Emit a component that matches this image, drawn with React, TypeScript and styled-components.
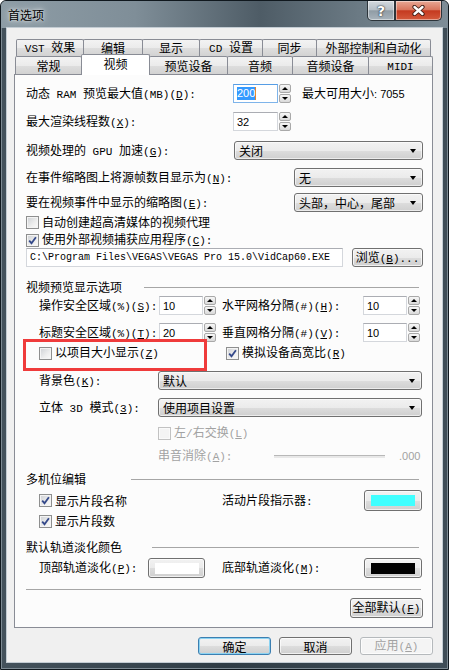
import React from 'react';
import styled, { createGlobalStyle } from 'styled-components';

const GlobalStyle = createGlobalStyle`
  html, body {
    margin: 0;
    padding: 0;
    width: 449px;
    height: 670px;
    overflow: hidden;
    background: #fff;
  }
  body {
    font-family: "Noto Sans CJK SC", "Liberation Sans", sans-serif;
    font-size: 12px;
    color: #000;
  }
`;

// latin runs inside the labels are drawn in a fixed-width face, like the old dialog font
const Latin = styled.span`
  font-family: "Liberation Mono", monospace;
  font-size: 11px;
`;

const withKeys = (s: string) =>
  s.split(/&(.)/).map((part, i) => (i % 2 === 1 ? <u key={i}>{part}</u> : part));

const Mixed = ({ text }: { text: string }) => (
  <>
    {text.split(/([\x20-\x7e]+)/).map((part, i) =>
      i % 2 === 1 ? <Latin key={i}>{withKeys(part)}</Latin> : part
    )}
  </>
);

const Window = styled.div`
  box-sizing: border-box;
  width: 449px;
  height: 670px;
  display: flex;
  flex-direction: column;
  padding: 0 6px 7px;
  border: 1px solid #10181e;
  border-radius: 6px 6px 0 0;
  background: linear-gradient(to right, #44525c, #2f3c45 50%, #3f4d57);
  box-shadow: inset 0 0 0 1px #7d8a93;
`;

const TitleBar = styled.div`
  height: 27px;
  margin: 0 -6px;
  padding: 0 6px 0 7px;
  display: flex;
  align-items: flex-start;
  border-radius: 5px 5px 0 0;
  background: linear-gradient(
    to right,
    #8e9da6 0%,
    #7f8e98 30%,
    #4e5c66 58%,
    #6b7a84 80%,
    #7e8d97 100%
  );
`;

const TitleText = styled.span`
  font-size: 12px;
  line-height: 27px;
  text-shadow: 0 0 7px rgba(255, 255, 255, 0.9), 0 0 3px rgba(255, 255, 255, 0.7);
`;

const CaptionButtons = styled.div`
  display: flex;
  margin-left: auto;
`;

const CaptionBtn = styled.div<{ $close?: boolean }>`
  box-sizing: border-box;
  width: ${p => (p.$close ? 47 : 28)}px;
  height: 20px;
  display: flex;
  align-items: center;
  justify-content: center;
  border: 1px solid #2c343a;
  border-top: none;
  border-radius: ${p => (p.$close ? '0 0 5px 0' : '0 0 0 5px')};
  background: ${p =>
    p.$close
      ? 'linear-gradient(#e8a895 0%, #d9775f 45%, #c53a20 52%, #d45a3c 100%)'
      : 'linear-gradient(#d3d9de 0%, #b7c0c7 45%, #909ca5 52%, #a9b4bc 100%)'};
  box-shadow: inset 0 0 0 1px rgba(255, 255, 255, 0.45);
  color: #fff;
  font: bold 14px "DejaVu Sans", sans-serif;
  text-shadow: 0 0 2px #1c232a, 0 0 1px #1c232a;
`;

const Client = styled.div`
  flex: 1;
  display: flex;
  flex-direction: column;
  padding: 11px 9px 7px 7px;
  background: #f0f0f0;
  box-shadow: 0 0 0 1px #c3ccd3;
`;

const TabStrip = styled.div`
  display: flex;
  flex-direction: column;
`;

const TabRow = styled.div<{ $h: number; $inset: number }>`
  display: flex;
  height: ${p => p.$h}px;
  padding-left: ${p => p.$inset}px;
`;

const Tab = styled.div<{ $w: number; $active?: boolean }>`
  box-sizing: border-box;
  width: ${p => p.$w}px;
  margin-right: -1px;
  display: flex;
  align-items: center;
  justify-content: center;
  border: 1px solid #898c95;
  border-bottom: none;
  border-radius: 2px 2px 0 0;
  white-space: nowrap;
  background: ${p =>
    p.$active ? '#fff' : 'linear-gradient(#f3f3f3 0%, #ebebeb 50%, #dedede 51%, #d2d2d2 100%)'};
  position: relative;
  z-index: ${p => (p.$active ? 1 : 0)};
  height: ${p => (p.$active ? 'calc(100% + 3px)' : '100%')};
  margin-top: ${p => (p.$active ? -2 : 0)}px;
  padding-bottom: ${p => (p.$active ? 3 : 0)}px;
`;

const Pane = styled.div`
  flex: 1;
  display: flex;
  flex-direction: column;
  border: 1px solid #898c95;
  background: #fcfcfc;
  padding: 9px 9px 9px 11px;
`;

const Row = styled.div<{ $h: number; $mt?: number; $indent?: number }>`
  position: relative;
  display: flex;
  align-items: center;
  flex-shrink: 0;
  height: ${p => p.$h}px;
  margin-top: ${p => p.$mt ?? 0}px;
  padding-left: ${p => p.$indent ?? 0}px;
`;

const Label = styled.span<{ $w?: number; $off?: boolean; $gap?: number }>`
  flex-shrink: 0;
  width: ${p => (p.$w ? `${p.$w}px` : 'auto')};
  margin-left: ${p => p.$gap ?? 0}px;
  white-space: nowrap;
  line-height: 14px;
  color: ${p => (p.$off ? '#a2a2a2' : '#000')};
`;

const Spacer = styled.div`
  flex: 1;
`;

const Num = styled.span<{ $off?: boolean; $gap?: number }>`
  font-family: "Liberation Sans", sans-serif;
  font-size: 11px;
  margin-left: ${p => p.$gap ?? 0}px;
  color: ${p => (p.$off ? '#a2a2a2' : '#000')};
`;

const TextBox = styled.div<{ $w: number; $focus?: boolean }>`
  box-sizing: border-box;
  flex-shrink: 0;
  width: ${p => p.$w}px;
  height: 19px;
  display: flex;
  align-items: center;
  padding-left: 3px;
  background: #fff;
  border: 1px solid ${p => (p.$focus ? '#7eb4ea' : '#d4d7dc')};
  border-top-color: ${p => (p.$focus ? '#569de5' : '#abadb3')};
  font-family: "Liberation Sans", sans-serif;
  font-size: 11px;
`;

const Selection = styled.span`
  background: #3399ff;
  color: #fff;
  line-height: 13px;
  border-right: 1px solid #e0842e;
`;

const PathText = styled.span`
  font-family: "Liberation Mono", monospace;
  font-size: 10px;
  white-space: nowrap;
`;

const Spinner = styled.div`
  display: flex;
  flex-direction: column;
  gap: 1px;
  width: 12px;
  height: 19px;
  margin-left: 1px;
  flex-shrink: 0;
`;

const SpinPart = styled.div<{ $down?: boolean }>`
  flex: 1;
  box-sizing: border-box;
  display: flex;
  align-items: center;
  justify-content: center;
  border: 1px solid #a9a9a9;
  border-radius: 2px;
  background: linear-gradient(#f7f7f7, #d9d9d9);

  &::after {
    content: '';
    border-left: 3px solid transparent;
    border-right: 3px solid transparent;
    ${p => (p.$down ? 'border-top: 3px solid #000;' : 'border-bottom: 3px solid #000;')}
  }
`;

const Combo = styled.div<{ $w: number }>`
  box-sizing: border-box;
  flex-shrink: 0;
  width: ${p => p.$w}px;
  height: 19px;
  display: flex;
  align-items: center;
  justify-content: space-between;
  padding: 0 6px 0 4px;
  border: 1px solid #707070;
  border-radius: 3px;
  background: linear-gradient(#f2f2f2 0%, #ebebeb 50%, #dddddd 51%, #cfcfcf 100%);
  box-shadow: inset 0 0 0 1px rgba(255, 255, 255, 0.6);
  white-space: nowrap;

  &::after {
    content: '';
    border-left: 3.5px solid transparent;
    border-right: 3.5px solid transparent;
    border-top: 4px solid #000;
  }
`;

const CheckItem = styled.div<{ $w?: number }>`
  display: flex;
  align-items: center;
  flex-shrink: 0;
  width: ${p => (p.$w ? `${p.$w}px` : 'auto')};
`;

const Box = styled.span<{ $off?: boolean }>`
  box-sizing: border-box;
  width: 13px;
  height: 13px;
  margin-right: 3px;
  flex-shrink: 0;
  display: flex;
  align-items: center;
  justify-content: center;
  border: 1px solid ${p => (p.$off ? '#c2c2c2' : '#8e8f8f')};
  background: ${p =>
    p.$off ? '#f4f4f4' : 'linear-gradient(135deg, #cdd0d4 0%, #eeeeee 60%, #fafafa 100%)'};
  box-shadow: inset 0 0 0 1px ${p => (p.$off ? '#fafafa' : '#f4f4f4')};
`;

const PushButton = styled.div<{ $w: number; $h: number; $default?: boolean; $off?: boolean }>`
  box-sizing: border-box;
  flex-shrink: 0;
  width: ${p => p.$w}px;
  height: ${p => p.$h}px;
  display: flex;
  align-items: center;
  justify-content: center;
  white-space: nowrap;
  border: 1px solid ${p => (p.$default ? '#3c7fb1' : p.$off ? '#b5b9bc' : '#707070')};
  border-radius: 3px;
  color: ${p => (p.$off ? '#8d8d8d' : '#000')};
  background: ${p =>
    p.$off ? '#f4f4f4' : 'linear-gradient(#f2f2f2 0%, #ebebeb 50%, #dddddd 51%, #cfcfcf 100%)'};
  box-shadow: inset 0 0 0 1px ${p => (p.$default ? '#8cd3f2' : 'rgba(255, 255, 255, 0.7)')};
`;

const Swatch = styled.span<{ $color: string }>`
  width: 44px;
  height: 11px;
  background: ${p => p.$color};
`;

const Track = styled.div<{ $w: number }>`
  flex-shrink: 0;
  width: ${p => p.$w}px;
  height: 2px;
  border-top: 1px solid #b8b8b8;
  background: #e8e8e8;
`;

const Rule = styled.div<{ $mr?: number }>`
  flex: 1;
  height: 0;
  margin-right: ${p => p.$mr ?? 0}px;
  border-top: 1px solid #a6a6a6;
`;

const Highlight = styled.div`
  position: absolute;
  left: -3px;
  top: -5px;
  width: 184px;
  height: 32px;
  box-sizing: border-box;
  border: 3px solid #ef3b3b;
  pointer-events: none;
`;

const ButtonBar = styled.div`
  display: flex;
  justify-content: flex-end;
  gap: 8px;
  margin-top: 9px;
`;

const CheckMark = () => (
  <svg width="9" height="9" viewBox="0 0 9 9">
    <path d="M1.2 4.6 L3.5 7.2 L7.9 1.2" fill="none" stroke="#34498a" strokeWidth="1.8" />
  </svg>
);

const Check = ({ label, checked, off, w }: { label: string; checked?: boolean; off?: boolean; w?: number }) => (
  <CheckItem $w={w}>
    <Box $off={off}>{checked && <CheckMark />}</Box>
    <Label $off={off}>
      <Mixed text={label} />
    </Label>
  </CheckItem>
);

const SpinField = ({ value, w, selected }: { value: string; w: number; selected?: boolean }) => (
  <>
    <TextBox $w={w} $focus={selected}>
      {selected ? <Selection>{value}</Selection> : value}
    </TextBox>
    <Spinner>
      <SpinPart />
      <SpinPart $down />
    </Spinner>
  </>
);

const tabsBack: [string, number][] = [
  ['VST 效果', 68],
  ['编辑', 60],
  ['显示', 58],
  ['CD 设置', 64],
  ['同步', 55],
  ['外部控制和自动化', 115],
];

const tabsFront: [string, number][] = [
  ['常规', 67],
  ['视频', 69],
  ['预览设备', 79],
  ['音频', 66],
  ['音频设备', 77],
  ['MIDI', 65],
];

const App = () => (
  <>
    <GlobalStyle />
    <Window>
      <TitleBar>
        <TitleText>首选项</TitleText>
        <CaptionButtons>
          <CaptionBtn>?</CaptionBtn>
          <CaptionBtn $close>
            <svg width="13" height="11" viewBox="0 0 13 11">
              <path d="M2.5 2 L10.5 9 M10.5 2 L2.5 9" stroke="#3b1c14" strokeWidth="4.2" strokeLinecap="round" />
              <path d="M2.5 2 L10.5 9 M10.5 2 L2.5 9" stroke="#fff" strokeWidth="2.4" strokeLinecap="round" />
            </svg>
          </CaptionBtn>
        </CaptionButtons>
      </TitleBar>

      <Client>
        <TabStrip>
          <TabRow $h={17} $inset={2}>
            {tabsBack.map(([name, w]) => (
              <Tab key={name} $w={w}>
                <Label>
                  <Mixed text={name} />
                </Label>
              </Tab>
            ))}
          </TabRow>
          <TabRow $h={18} $inset={1}>
            {tabsFront.map(([name, w]) => (
              <Tab key={name} $w={w} $active={name === '视频'}>
                <Label>
                  <Mixed text={name} />
                </Label>
              </Tab>
            ))}
          </TabRow>
        </TabStrip>

        <Pane>
          <Row $h={19}>
            <Label $w={207}>
              <Mixed text="动态 RAM 预览最大值(MB)(&D):" />
            </Label>
            <SpinField value="200" w={45} selected />
            <Label $gap={11}>
              最大可用大小<Num>:&nbsp;7055</Num>
            </Label>
          </Row>
          <Row $h={19} $mt={9}>
            <Label $w={207}>
              <Mixed text="最大渲染线程数(&X):" />
            </Label>
            <SpinField value="32" w={45} />
          </Row>
          <Row $h={19} $mt={10}>
            <Label>
              <Mixed text="视频处理的 GPU 加速(&G):" />
            </Label>
            <Spacer />
            <Combo $w={189}>关闭</Combo>
          </Row>
          <Row $h={19} $mt={8}>
            <Label>
              <Mixed text="在事件缩略图上将源帧数目显示为(&N):" />
            </Label>
            <Spacer />
            <Combo $w={129}>无</Combo>
          </Row>
          <Row $h={19} $mt={6}>
            <Label>
              <Mixed text="要在视频事件中显示的缩略图(&E):" />
            </Label>
            <Spacer />
            <Combo $w={129}>头部，中心，尾部</Combo>
          </Row>
          <Row $h={14} $mt={3}>
            <Check label="自动创建超高清媒体的视频代理" />
          </Row>
          <Row $h={14} $mt={4}>
            <Check label="使用外部视频捕获应用程序(&C):" checked />
          </Row>
          <Row $h={19} $mt={1}>
            <TextBox $w={317}>
              <PathText>{'C:\\Program Files\\VEGAS\\VEGAS Pro 15.0\\VidCap60.EXE'}</PathText>
            </TextBox>
            <Spacer />
            <PushButton $w={71} $h={19}>
              <Label>
                <Mixed text="浏览(&B)..." />
              </Label>
            </PushButton>
          </Row>

          <Row $h={14} $mt={13}>
            <Label $w={118}>视频预览显示选项</Label>
            <Rule $mr={4} />
          </Row>
          <Row $h={19} $mt={2} $indent={13}>
            <Label $w={120}>
              <Mixed text="操作安全区域(%)(&S):" />
            </Label>
            <SpinField value="10" w={44} />
            <Label $w={141} $gap={6}>
              <Mixed text="水平网格分隔(#)(&H):" />
            </Label>
            <SpinField value="10" w={44} />
          </Row>
          <Row $h={19} $mt={8} $indent={13}>
            <Label $w={120}>
              <Mixed text="标题安全区域(%)(&T):" />
            </Label>
            <SpinField value="20" w={44} />
            <Label $w={141} $gap={6}>
              <Mixed text="垂直网格分隔(#)(&V):" />
            </Label>
            <SpinField value="10" w={44} />
          </Row>
          <Row $h={18} $mt={2} $indent={13}>
            <Highlight />
            <Check label="以项目大小显示(&Z)" w={187} />
            <Check label="模拟设备高宽比(&R)" checked />
          </Row>
          <Row $h={19} $mt={9} $indent={13}>
            <Label $w={119}>
              <Mixed text="背景色(&K):" />
            </Label>
            <Combo $w={264}>默认</Combo>
          </Row>
          <Row $h={19} $mt={8} $indent={13}>
            <Label $w={119}>
              <Mixed text="立体 3D 模式(&3):" />
            </Label>
            <Combo $w={264}>使用项目设置</Combo>
          </Row>
          <Row $h={14} $mt={9} $indent={132}>
            <Check label="左/右交换(&L)" off />
          </Row>
          <Row $h={14} $mt={9} $indent={132}>
            <Label $w={116} $off>
              <Mixed text="串音消除(&A):" />
            </Label>
            <Track $w={111} />
            <Num $off $gap={14}>.000</Num>
          </Row>

          <Row $h={14} $mt={9}>
            <Label $w={105}>多机位编辑</Label>
            <Rule $mr={4} />
          </Row>
          <Row $h={21} $mt={4} $indent={13}>
            <Check label="显示片段名称" checked w={183} />
            <Label $w={142}>
              <Mixed text="活动片段指示器:" />
            </Label>
            <PushButton $w={58} $h={21}>
              <Swatch $color="#40ffff" />
            </PushButton>
          </Row>
          <Row $h={14} $mt={3} $indent={13}>
            <Check label="显示片段数" checked />
          </Row>

          <Row $h={14} $mt={12}>
            <Label $w={126}>默认轨道淡化颜色</Label>
            <Rule $mr={4} />
          </Row>
          <Row $h={20} $mt={4} $indent={13}>
            <Label $w={109}>
              <Mixed text="顶部轨道淡化(&P):" />
            </Label>
            <PushButton $w={57} $h={20}>
              <Swatch $color="#ffffff" />
            </PushButton>
            <Label $w={142} $gap={17}>
              <Mixed text="底部轨道淡化(&M):" />
            </Label>
            <PushButton $w={58} $h={20}>
              <Swatch $color="#000000" />
            </PushButton>
          </Row>
          <Row $h={1} $mt={11}>
            <Rule $mr={2} />
          </Row>
          <Row $h={20} $mt={8}>
            <Spacer />
            <PushButton $w={73} $h={20}>
              <Label>
                <Mixed text="全部默认(&F)" />
              </Label>
            </PushButton>
          </Row>
        </Pane>

        <ButtonBar>
          <PushButton $w={73} $h={18} $default>
            确定
          </PushButton>
          <PushButton $w={73} $h={18}>
            取消
          </PushButton>
          <PushButton $w={73} $h={18} $off>
            <Label $off>
              <Mixed text="应用(&A)" />
            </Label>
          </PushButton>
        </ButtonBar>
      </Client>
    </Window>
  </>
);

export default App;
